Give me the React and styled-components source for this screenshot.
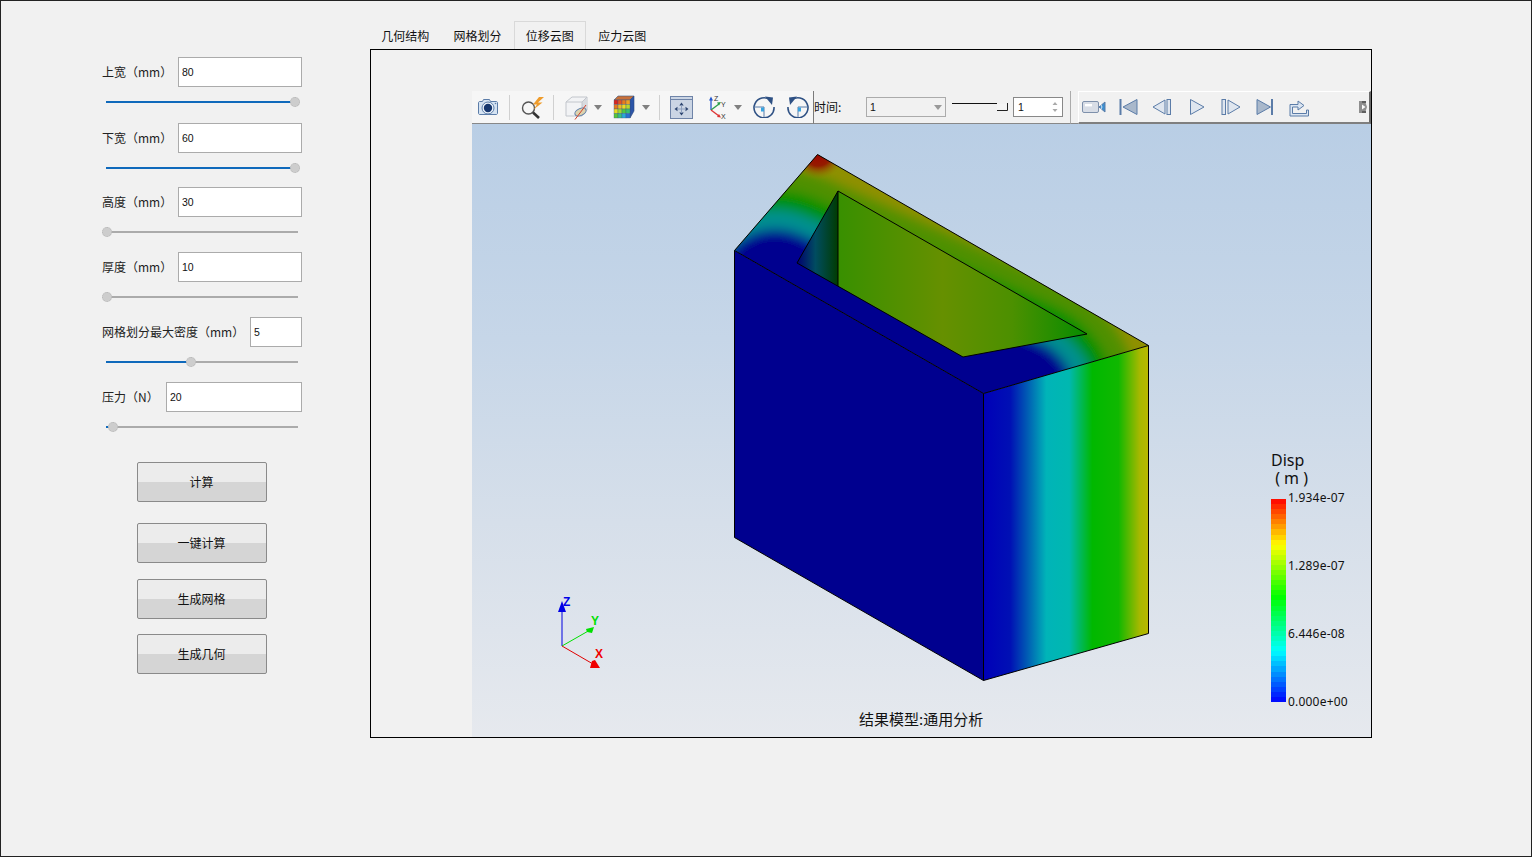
import React from "react";
import styled, { createGlobalStyle } from "styled-components";

const Global = createGlobalStyle`
  html, body { margin: 0; padding: 0; background: #f1f1f1; }
  body { font-family: "Noto Sans CJK SC", "Liberation Sans", sans-serif; font-size: 12px; color: #111; }
`;

const Win = styled.div`
  box-sizing: border-box; width: 1532px; height: 857px; display: flex;
  border: 1px solid #222; background: #f1f1f1; overflow: hidden;
`;
const Side = styled.aside`
  box-sizing: border-box; width: 369px; flex: none; padding: 56px 0 0 100px;
  display: flex; flex-direction: column;
`;
const Fields = styled.div`width: 201px; display: flex; flex-direction: column;`;
const Group = styled.div`margin-bottom: ${p => p.$after}px;`;
const Row = styled.div`display: flex; align-items: center; height: 30px;`;
const Label = styled.label`
  flex: none; box-sizing: border-box; width: ${p => p.$w}px; padding-left: 1px; font-size: 12px; line-height: 30px; white-space: nowrap; color: #222;
`;
const Field = styled.input`
  box-sizing: border-box; flex: 1; min-width: 0; height: 30px; padding: 0 3px; border: 1px solid #ababab;
  background: #fff; font: 10.5px "Liberation Sans", sans-serif; color: #111; outline: none;
`;
const Slider = styled.div`position: relative; height: 30px; margin-left: 5px; width: 192px; display: flex; align-items: center;`;
const Track = styled.div`
  width: 100%; height: 2px;
  background: linear-gradient(to right, #0f69bb ${p => p.$pos}px, #ababab ${p => p.$pos}px);
`;
const Thumb = styled.span`
  position: absolute; top: 10px; left: ${p => p.$pos - 5}px; box-sizing: border-box; width: 10px; height: 10px;
  border-radius: 50%; background: #cdcdcd; border: 1px dotted #b5b5b5;
`;
const Actions = styled.div`width: 201px; display: flex; flex-direction: column; align-items: center;`;
const Push = styled.button`
  box-sizing: border-box; width: 130px; height: 40px; margin-top: ${p => p.$mt}px; padding: 0 0 2px;
  border: 1px solid #8a8a8a; border-radius: 2px; color: #111;
  background: linear-gradient(to bottom, #ececec 50%, #d5d5d5 50%);
  font: 12px "Noto Sans CJK SC", sans-serif;
`;

const Main = styled.main`flex: none; width: 1002px; padding-top: 20px; display: flex; flex-direction: column;`;
const Tabs = styled.nav`display: flex; height: 28px; margin-left: -1px;`;
const Tab = styled.div`
  box-sizing: border-box; width: 72.33px; height: 28px; line-height: 27px; text-align: center; font-size: 12px; color: #111;
  border: 1px solid ${p => (p.$on ? "#d9d9d9" : "transparent")}; border-bottom: 0;
`;
const Pane = styled.section`
  box-sizing: border-box; width: 1002px; height: 689px; border: 1px solid #000; padding: 41px 0 0 101px;
  display: flex; flex-direction: column;
`;
const Toolbar = styled.div`display: flex; height: 33px; flex: none; background: #f1f1f1;`;
const ToolA = styled.div`
  box-sizing: border-box; width: 342px; display: flex; align-items: center; background: #f6f6f6;
  border-bottom: 1px solid #888; border-right: 1px solid #7a7a7a;
`;
const ToolB = styled.div`
  box-sizing: border-box; width: 257px; display: flex; align-items: center; border-bottom: 1px solid #888;
  border-right: 1px solid #ababab;
`;
const ToolFill = styled.div`box-sizing: border-box; width: 7px; border-bottom: 1px solid #888;`;
const ToolC = styled.div`
  box-sizing: border-box; flex: 1; display: flex; align-items: center; position: relative;
  border-top: 1px solid #fff; border-left: 1px solid #fff; border-bottom: 2px solid #7f7f7f; border-right: 2px solid #6a6a6a;
`;
const Sep = styled.span`flex: none; width: 1px; height: 25px; background: #d0d0d0; margin-left: ${p => p.$ml}px;`;
const Ico = styled.svg`flex: none; display: block; margin-left: ${p => p.$ml}px;`;
const TimeLabel = styled.span`flex: none; width: 30px; font-size: 12px; line-height: 16px; color: #111;`;
const Combo = styled.div`
  box-sizing: border-box; flex: none; width: 80px; height: 20px; margin-left: 22px; padding: 0 3px; border: 1px solid #ababab;
  display: flex; align-items: center; justify-content: space-between; font: 10.5px "Liberation Sans", sans-serif; background: #f1f1f1;
`;
const Spin = styled.div`
  box-sizing: border-box; flex: none; width: 50px; height: 20px; margin-left: 5px; padding: 0 4px; border: 1px solid #888;
  display: flex; align-items: center; justify-content: space-between; font: 10.5px "Liberation Sans", sans-serif; background: #fff;
`;
const Grip = styled.svg`position: absolute; right: 1px; top: 8px;`;

const Viewport = styled.div`
  position: relative; flex: 1; overflow: hidden;
  background: linear-gradient(to bottom, #b9cee5 0%, #c6d6e8 35%, #d6dfea 65%, #e6e9ee 100%);
`;
const Model = styled.svg`display: block; width: 899px; height: 613px;`;
const Legend = styled.div`position: absolute; left: 799px; top: 327px; color: #111; font-family: "Noto Sans", sans-serif;`;
const LegendTitle = styled.div`font-size: 16px; line-height: 18px; white-space: pre;`;
const LegendBody = styled.div`display: flex; margin-top: 12px; height: 203px;`;
const stops = (() => {
  const key = [[0, [255, 0, 0]], [0.225, [255, 255, 0]], [0.485, [0, 255, 0]], [0.75, [0, 255, 255]], [1, [0, 0, 255]]];
  const n = 40, out = [];
  for (let i = 0; i < n; i++) {
    const t = (i + 0.5) / n;
    let k = 0;
    while (k < key.length - 2 && t > key[k + 1][0]) k++;
    const [a, ca] = key[k], [b, cb] = key[k + 1];
    const f = (t - a) / (b - a);
    const c = ca.map((v, j) => Math.round(v + (cb[j] - v) * f));
    out.push(`rgb(${c.join(",")}) ${(i / n * 100).toFixed(2)}% ${((i + 1) / n * 100).toFixed(2)}%`);
  }
  return out.join(",");
})();
const Bar = styled.div`width: 15px; flex: none; background: linear-gradient(to bottom, ${stops});`;
const Ticks = styled.div`
  display: flex; flex-direction: column; justify-content: space-between; margin: -10px 0 -8px 2px;
  font-size: 12px; line-height: 17px; letter-spacing: 0.2px; white-space: nowrap;
`;
const Caption = styled.div`position: absolute; left: 387px; bottom: 8px; font-size: 15px; line-height: 20px; color: #111; white-space: nowrap;`;

const BLUE = "#5b7ca8";
const Drop = ({ ml }) => (
  <Ico $ml={ml} width="8" height="5" viewBox="0 0 8 5"><path d="M0 0h8L4 5z" fill="#808080" /></Ico>
);
const Camera = ({ ml }) => (
  <Ico $ml={ml} width="22" height="20" viewBox="0 0 22 20">
    <path d="M2.500 4.500h3l1-2h6l1 2h6a1.500 1.500 0 0 1 1 1v11a1.500 1.500 0 0 1-1 1h-17a1.500 1.500 0 0 1-1-1v-11a1.500 1.500 0 0 1 1-1z" fill="#d5e3f2" stroke={BLUE} />
    <circle cx="11" cy="11" r="6" fill="#eef4fb" stroke={BLUE} />
    <circle cx="11" cy="11" r="4.200" fill="#17376e" />
    <circle cx="18.500" cy="6.500" r="0.800" fill="#5b7ca8" />
  </Ico>
);
const Magnifier = ({ ml }) => (
  <Ico $ml={ml} width="25" height="23" viewBox="0 0 25 23">
    <circle cx="8.500" cy="12" r="6" fill="#f7f7f7" stroke="#555" strokeWidth="1.400" />
    <path d="M13 16.500l6 5.500" stroke="#333" strokeWidth="2.600" />
    <path d="M19 1l-6 7.500h4l-3.500 5 9-7h-4.500L24 1z" fill="#ef9c2b" />
  </Ico>
);
const SectionCube = ({ ml }) => (
  <Ico $ml={ml} width="25" height="25" viewBox="0 0 25 25">
    <path d="M1 7l6-5h15v13l-5 6H1z" fill="#f2f3f5" stroke="#c2c6cc" />
    <path d="M17 7l5-5v13l-5 6z" fill="#d8dbe0" />
    <path d="M1 7h16v14M17 7l5-5" fill="none" stroke="#c2c6cc" />
    <ellipse cx="15.500" cy="17" rx="6" ry="3.400" transform="rotate(-25 15.500 17)" fill="#ddd3ae" stroke="#5b7ca8" />
    <path d="M10 24.500L21 10" stroke="#d2402b" strokeWidth="1" />
  </Ico>
);
const HEAT = [
  "#d8261f", "#e8541e", "#e87a1c", "#f0a020",
  "#e87a1c", "#eebb22", "#e8dc20", "#b8d82a",
  "#e8dc20", "#a0d830", "#50c840", "#38c070",
  "#58c838", "#38c080", "#2aa8d8", "#2a70d0",
];
const GridCube = ({ ml }) => (
  <Ico $ml={ml} width="22" height="24" viewBox="0 0 22 24">
    <path d="M1 5l4-4h16l-4 4z" fill="#c8703a" stroke="#3b5a86" strokeWidth=".6" />
    <path d="M17 5l4-4v15l-4 7z" fill="#2c55a8" stroke="#2b4a7c" strokeWidth=".6" />
    {HEAT.map((c, i) => (
      <rect key={i} x={1 + (i % 4) * 4} y={5 + Math.floor(i / 4) * 4.5} width="4" height="4.500" fill={c} stroke="#3b5a86" strokeWidth=".35" />
    ))}
  </Ico>
);
const Fit = ({ ml }) => (
  <Ico $ml={ml} width="23" height="23" viewBox="0 0 23 23">
    <rect x=".5" y=".5" width="22" height="22" fill="#cbd5e4" stroke="#6f84a8" />
    <path d="M1 3.500h21" stroke="#6f84a8" />
    <path d="M11.500 6.500l2.200 3h-4.400zM11.500 19.500l-2.200-3h4.400zM4.500 13l3-2.200v4.400zM18.500 13l-3 2.200v-4.400z" fill="#2d4570" />
    <path d="M11.500 9v8M7 13h9" stroke="#8ea0bf" />
  </Ico>
);
const SmallAxes = ({ ml }) => (
  <Ico $ml={ml} width="20" height="24" viewBox="0 0 20 24" fontFamily="Liberation Sans" fontSize="7">
    <path d="M4 15V4" stroke="#2255cc" strokeWidth="1.300" />
    <path d="M4 15l8-6" stroke="#2aa04a" strokeWidth="1.300" />
    <path d="M4 15l8 6" stroke="#d33" strokeWidth="1.300" />
    <path d="M4 1.500l-2 4h4z" fill="#2255cc" />
    <path d="M14 7l-4 .5 2 3z" fill="#2aa04a" />
    <path d="M14 22.500l-4-.5 2-3z" fill="#d33" />
    <text x="7" y="6" fill="#333">Z</text><text x="14" y="12" fill="#333">Y</text><text x="14" y="24" fill="#333">X</text>
  </Ico>
);
const Rotate = ({ ml, flip }) => (
  <Ico $ml={ml} width="22" height="22" viewBox="0 0 22 22">
    <g transform={flip ? "translate(22 0) scale(-1 1)" : undefined}>
      <path d="M17.500 4.200A10 10 0 1 0 21 11" fill="none" stroke="#2f5184" strokeWidth="1.600" />
      <path d="M12 .5l8 1-1 7.500z" fill="#2f5184" />
      <path d="M1 11h10v10" fill="none" stroke="#5b7ca8" />
      <rect x="8" y="11.500" width="3" height="4" fill="#39a4e0" />
    </g>
  </Ico>
);
const Video = ({ ml }) => (
  <Ico $ml={ml} width="24" height="14" viewBox="0 0 24 14">
    <rect x=".5" y="1.500" width="16" height="11" rx="1.500" fill="#d8dde6" stroke="#7e90ab" />
    <rect x="3" y="4" width="7" height="2.400" fill="#fff" />
    <path d="M17 7l6-5v10z" fill="#3d8fd0" stroke="#5b7ca8" />
    <path d="M18 3l2 4-2 4" fill="none" stroke="#fff" strokeWidth=".8" />
  </Ico>
);
const Player = ({ ml, w = 19, d }) => (
  <Ico $ml={ml} width={w} height="18" viewBox={`0 0 ${w} 18`}>{d}</Ico>
);
const pf = { fill: "#dfe6ef", stroke: "#5b7ca8" };
const pd = { fill: "#a9b8cb", stroke: "#5b7ca8" };
const Export = ({ ml }) => (
  <Ico $ml={ml} width="20" height="19" viewBox="0 0 20 19">
    <path d="M1 6.500h8V3l6 4.500-6 4.500V9H3.500v6.500h14V12H19.500v6H1z" fill="#dbe5f1" stroke="#5b7ca8" strokeLinejoin="round" />
  </Ico>
);

const TOP = "817.5,154.5 734.5,250.5 983.5,393.5 1148.500,345.5";
const FIELDS = [
  { label: "上宽（mm）", w: 77, v: "80", pos: 189, after: 6 },
  { label: "下宽（mm）", w: 77, v: "60", pos: 189, after: 4 },
  { label: "高度（mm）", w: 77, v: "30", pos: 1, after: 5 },
  { label: "厚度（mm）", w: 77, v: "10", pos: 1, after: 5 },
  { label: "网格划分最大密度（mm）", w: 149, v: "5", pos: 85, after: 5 },
  { label: "压力（N）", w: 65, v: "20", pos: 7, after: 0 },
];
const BUTTONS = [["计算", 20], ["一键计算", 21], ["生成网格", 16], ["生成几何", 15]];
const TABS = ["几何结构", "网格划分", "位移云图", "应力云图"];
const SPINE = "M775 290L1015 398";

export default function App() {
  return (
    <Win>
      <Global />
      <Side>
        <Fields>
          {FIELDS.map(f => (
            <Group key={f.label} $after={f.after}>
              <Row>
                <Label $w={f.w}>{f.label}</Label>
                <Field defaultValue={f.v} readOnly />
              </Row>
              <Slider>
                <Track $pos={f.pos} />
                <Thumb $pos={f.pos} />
              </Slider>
            </Group>
          ))}
        </Fields>
        <Actions>
          {BUTTONS.map(([t, mt]) => <Push key={t} $mt={mt}>{t}</Push>)}
        </Actions>
      </Side>
      <Main>
        <Tabs>{TABS.map((t, i) => <Tab key={t} $on={i === 2}>{t}</Tab>)}</Tabs>
        <Pane>
          <Toolbar>
            <ToolA>
              <Camera ml={5} />
              <Sep $ml={10} />
              <Magnifier ml={10} />
              <Sep $ml={8} />
              <SectionCube ml={11} />
              <Drop ml={4} />
              <GridCube ml={11} />
              <Drop ml={7} />
              <Sep $ml={9} />
              <Fit ml={10} />
              <SmallAxes ml={14} />
              <Drop ml={7} />
              <Rotate ml={11} />
              <Rotate ml={12} flip />
            </ToolA>
            <ToolB>
              <TimeLabel>时间:</TimeLabel>
              <Combo>1<svg width="8" height="5" viewBox="0 0 8 5"><path d="M0 0h8L4 5z" fill="#999" /></svg></Combo>
              <Ico $ml={6} width="56" height="10" viewBox="0 0 56 10">
                <path d="M0 1.500h45" stroke="#111" />
                <path d="M45 8.500h10.500V1" fill="none" stroke="#222" />
                <path d="M45 2h9.500v5.500H45z" fill="#f4f4f4" />
              </Ico>
              <Spin>1<svg width="6" height="12" viewBox="0 0 6 12"><path d="M3 1l2.500 3h-5zM3 11L.5 8h5z" fill="#aaa" /></svg></Spin>
            </ToolB>
            <ToolFill />
            <ToolC>
              <Video ml={3} />
              <Player ml={13} w={19} d={<><path d="M1.500 1v16" stroke="#5b7ca8" strokeWidth="2" /><path d="M18 1.500v15L4 9z" {...pd} /></>} />
              <Player ml={14} w={20} d={<><path d="M13 2v14L1 9z" {...pf} /><rect x="15" y="1.500" width="3.500" height="15" {...pf} /></>} />
              <Player ml={17} w={16} d={<path d="M1.500 1.500v15L15 9z" {...pf} />} />
              <Player ml={16} w={20} d={<><rect x="1" y="1.500" width="3.500" height="15" {...pf} /><path d="M7 2v14L19 9z" {...pf} /></>} />
              <Player ml={15} w={18} d={<><path d="M1 1.500v15L14.500 9z" {...pd} /><path d="M16 1v16" stroke="#5b7ca8" strokeWidth="2" /></>} />
              <Export ml={15} />
              <Grip width="9" height="14" viewBox="0 0 9 14">
                <path d="M0 1h6l2 6-2 6H0z" fill="#8e8e8e" />
                <path d="M3 1h4v2H3zM3 11h4v2H3z" fill="#5f5f5f" />
                <path d="M3 4.500L6.500 7 3 9.500z" fill="#fafafa" />
              </Grip>
            </ToolC>
          </Toolbar>
          <Viewport>
            <Model viewBox="472 124 899 613">
              <defs>
                <clipPath id="topClip"><polygon points={TOP} /></clipPath>
                <filter id="soft" filterUnits="userSpaceOnUse" x="500" y="0" width="800" height="700"><feGaussianBlur stdDeviation="6" /></filter>
                <radialGradient id="apex" gradientUnits="userSpaceOnUse" cx="818" cy="152" r="28">
                  <stop offset="0" stopColor="#a00000" />
                  <stop offset=".5" stopColor="#941c00" />
                  <stop offset="1" stopColor="#909000" stopOpacity="0" />
                </radialGradient>
                <linearGradient id="rightFace" gradientUnits="userSpaceOnUse" x1="984" y1="0" x2="1148" y2="0">
                  <stop offset="0" stopColor="#0000b8" />
                  <stop offset=".16" stopColor="#0010b4" />
                  <stop offset=".27" stopColor="#0060b4" />
                  <stop offset=".38" stopColor="#00b4b8" />
                  <stop offset=".52" stopColor="#00b8b0" />
                  <stop offset=".66" stopColor="#00b800" />
                  <stop offset=".82" stopColor="#10b800" />
                  <stop offset=".95" stopColor="#a8b800" />
                  <stop offset="1" stopColor="#b8b800" />
                </linearGradient>
                <linearGradient id="wall" gradientUnits="userSpaceOnUse" x1="838" y1="0" x2="1087" y2="0">
                  <stop offset="0" stopColor="#389000" />
                  <stop offset=".42" stopColor="#669000" />
                  <stop offset=".7" stopColor="#4c9000" />
                  <stop offset="1" stopColor="#068c00" />
                </linearGradient>
                <linearGradient id="cheek" gradientUnits="userSpaceOnUse" x1="797" y1="0" x2="838" y2="0">
                  <stop offset="0" stopColor="#000070" />
                  <stop offset=".45" stopColor="#004c60" />
                  <stop offset="1" stopColor="#003c00" />
                </linearGradient>
              </defs>
              <polygon points="734.5,250.5 983.5,393.5 983.5,680.5 734.5,537.5" fill="#00008f" />
              <polygon points="983.5,393.5 1148.500,345.5 1148.500,633.5 983.5,680.5" fill="url(#rightFace)" />
              <g clipPath="url(#topClip)">
                <rect x="720" y="140" width="440" height="270" fill="#909000" />
                <g filter="url(#soft)" fill="none" strokeLinecap="round">
                  <path d={SPINE} stroke="#509000" strokeWidth="244" />
                  <path d={SPINE} stroke="#009000" strokeWidth="200" />
                  <path d={SPINE} stroke="#009090" strokeWidth="160" />
                  <path d={SPINE} stroke="#00008f" strokeWidth="122" />
                </g>
                <circle cx="818" cy="152" r="28" fill="url(#apex)" />
              </g>
              <polygon points="838,191 797,263 838,286" fill="url(#cheek)" />
              <polygon points="838,191 1087,334 963,357 838,286" fill="url(#wall)" />
              <g fill="none" stroke="#000" strokeWidth="1">
                <polygon points={TOP} />
                <path d="M734.5 250.500V537.500L983.5 680.500V393.500M983.5 680.500L1148.500 633.500V345.500" />
                <path d="M838 191L797 263L963 357L1087 334L838 191V286" />
              </g>
              <g fontFamily="Liberation Sans" fontWeight="700" fontSize="12">
                <path d="M562 646V610" stroke="#0000e0" strokeWidth="1" />
                <path d="M562 646L590 630" stroke="#00e000" strokeWidth="1" />
                <path d="M562 646L593 664" stroke="#e00000" strokeWidth="1" />
                <path d="M562 601l4 11h-8z" fill="#0000e6" />
                <path d="M594 627l-2 6-5-1-1-3z" fill="#00e000" />
                <path d="M600 668h-10l2-7 3-1z" fill="#f00000" />
                <text x="563" y="606" fill="#0000e6">Z</text>
                <text x="591" y="625" fill="#00e000">Y</text>
                <text x="595" y="658" fill="#f00000">X</text>
              </g>
            </Model>
            <Legend>
              <LegendTitle>{"Disp\n ( m )"}</LegendTitle>
              <LegendBody>
                <Bar />
                <Ticks>
                  <span>1.934e-07</span>
                  <span>1.289e-07</span>
                  <span>6.446e-08</span>
                  <span>0.000e+00</span>
                </Ticks>
              </LegendBody>
            </Legend>
            <Caption>结果模型:通用分析</Caption>
          </Viewport>
        </Pane>
      </Main>
    </Win>
  );
}
